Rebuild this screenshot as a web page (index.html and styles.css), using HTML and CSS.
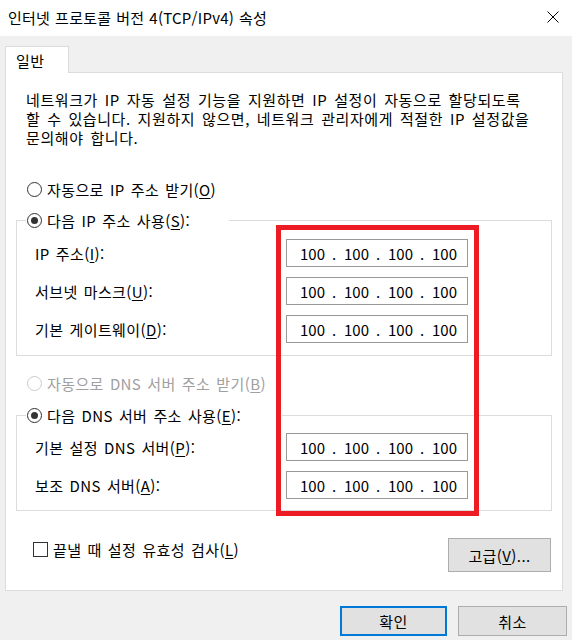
FILE: index.html
```html
<!DOCTYPE html>
<html lang="ko">
<head>
<meta charset="UTF-8">
<title>인터넷 프로토콜 버전 4(TCP/IPv4) 속성</title>
<link rel="stylesheet" href="styles.css">
</head>
<body>
  <div class="titlebar">
    <span class="title">인터넷 프로토콜 버전 4(TCP/IPv4) 속성</span>
    <span class="close">
      <svg width="12" height="12" viewBox="0 0 12 12"><path d="M0.5 0.5 L11.5 11.5 M11.5 0.5 L0.5 11.5" stroke="#000" stroke-width="1"/></svg>
    </span>
  </div>

  <div class="dialog">
    <div class="tabs">
      <div class="tab">일반</div>
    </div>

    <div class="panel">
      <p class="desc">네트워크가 IP 자동 설정 기능을 지원하면 IP 설정이 자동으로 할당되도록<br>할 수 있습니다. 지원하지 않으면, 네트워크 관리자에게 적절한 IP 설정값을<br>문의해야 합니다.</p>

      <div class="radio first"><span class="circle"></span>자동으로 IP 주소 받기(<u>O</u>)</div>

      <fieldset class="group">
        <legend class="legend-ip"><span class="radio"><span class="circle checked"></span>다음 IP 주소 사용(<u>S</u>):</span></legend>
        <div class="row"><span class="label">IP 주소(<u>I</u>):</span><div class="ip"><span class="oct">100</span><span class="sep">.</span><span class="oct">100</span><span class="sep">.</span><span class="oct">100</span><span class="sep">.</span><span class="oct">100</span></div></div>
        <div class="row"><span class="label">서브넷 마스크(<u>U</u>):</span><div class="ip"><span class="oct">100</span><span class="sep">.</span><span class="oct">100</span><span class="sep">.</span><span class="oct">100</span><span class="sep">.</span><span class="oct">100</span></div></div>
        <div class="row"><span class="label">기본 게이트웨이(<u>D</u>):</span><div class="ip"><span class="oct">100</span><span class="sep">.</span><span class="oct">100</span><span class="sep">.</span><span class="oct">100</span><span class="sep">.</span><span class="oct">100</span></div></div>
      </fieldset>

      <div class="radio disabled second"><span class="circle"></span>자동으로 DNS 서버 주소 받기(<u>B</u>)</div>

      <fieldset class="group dns">
        <legend class="legend-dns"><span class="radio"><span class="circle checked"></span>다음 DNS 서버 주소 사용(<u>E</u>):</span></legend>
        <div class="row"><span class="label">기본 설정 DNS 서버(<u>P</u>):</span><div class="ip"><span class="oct">100</span><span class="sep">.</span><span class="oct">100</span><span class="sep">.</span><span class="oct">100</span><span class="sep">.</span><span class="oct">100</span></div></div>
        <div class="row"><span class="label">보조 DNS 서버(<u>A</u>):</span><div class="ip"><span class="oct">100</span><span class="sep">.</span><span class="oct">100</span><span class="sep">.</span><span class="oct">100</span><span class="sep">.</span><span class="oct">100</span></div></div>
      </fieldset>

      <div class="footer">
        <div class="check"><span class="box"></span>끝낼 때 설정 유효성 검사(<u>L</u>)</div>
        <button class="btn advanced">고급(<u>V</u>)...</button>
      </div>
    </div>

    <div class="actions">
      <button class="btn ok">확인</button>
      <button class="btn cancel">취소</button>
    </div>
  </div>

  <!-- 강조 표시 -->
  <div class="highlight"></div>
</body>
</html>
```

FILE: styles.css
```css
body {
  margin: 0;
  width: 572px;
  height: 640px;
  overflow: hidden;
  background: #f0f0f0;
  color: #000;
  font-family: "Noto Sans CJK KR", "Noto Sans", sans-serif;
  font-size: 15px;
  line-height: 19px;
  letter-spacing: 0.4px;
  word-spacing: 1.5px;
}
u {
  text-decoration: underline;
  text-underline-offset: 2px;
}

/* 제목 표시줄 */
.titlebar {
  height: 36px;
  background: #fff;
  display: flex;
  align-items: center;
  justify-content: space-between;
  padding: 0 13px 0 8px;
  box-sizing: border-box;
}
.title {
  margin-top: -2px;
  letter-spacing: 0.25px;
  word-spacing: 0.5px;
}
.close {
  display: flex;
  margin-top: -2px;
}

.dialog {
  padding: 10px 9px 0 5px;
}

/* 탭 */
.tabs {
  display: flex;
}
.tab {
  position: relative;
  z-index: 1;
  width: 64px;
  height: 27px;
  margin-bottom: -1px;
  padding-left: 10px;
  box-sizing: border-box;
  background: #fff;
  border: 1px solid #dcdcdc;
  border-bottom: none;
  line-height: 27px;
}

.panel {
  background: #fff;
  border: 1px solid #dcdcdc;
  padding-bottom: 18px;
}
.desc {
  margin: 0;
  padding: 17px 0 0 20px;
  letter-spacing: 0.6px;
  word-spacing: 2px;
}

/* 라디오 버튼 */
.radio {
  display: flex;
  align-items: center;
  height: 20px;
}
.radio.first {
  margin: 32px 0 0 21px;
}
.radio.second {
  margin: 17px 0 0 21px;
}
.radio.disabled {
  color: #a0a0a0;
}
.circle {
  width: 13px;
  height: 13px;
  border: 1px solid #333;
  border-radius: 50%;
  margin-right: 5px;
  display: flex;
  align-items: center;
  justify-content: center;
  flex-shrink: 0;
}
.disabled .circle {
  border-color: #cccccc;
}
.circle.checked::after {
  content: "";
  width: 7px;
  height: 7px;
  border-radius: 50%;
  background: #333;
}

/* 그룹 상자 */
.group {
  margin: 11px 10px 0 10px;
  padding: 9px 10px 12px 9px;
  border: 1px solid #dcdcdc;
  min-width: 0;
}
.group.dns {
  margin-top: 12px;
  padding-top: 8px;
  padding-bottom: 11px;
}
.group legend {
  padding: 0 0 0 1px;
  background: #fff;
}
.legend-ip {
  width: 202px;
}
.legend-dns {
  width: 255px;
}
.row {
  display: flex;
  align-items: center;
  justify-content: space-between;
  padding: 0 73px 0 9px;
  height: 28px;
}
.row + .row {
  margin-top: 10px;
}
.ip {
  width: 182px;
  height: 28px;
  box-sizing: border-box;
  border: 1px solid #999;
  display: flex;
  align-items: center;
  padding-left: 13px;
  letter-spacing: 0;
}
.oct {
  width: 24px;
  text-align: center;
}
.sep {
  width: 20px;
  text-align: center;
}

/* 아래쪽 */
.footer {
  display: flex;
  justify-content: space-between;
  align-items: flex-start;
  margin: 27px 11px 0 27px;
}
.check {
  display: flex;
  align-items: center;
  height: 20px;
  margin-top: 1px;
}
.box {
  width: 13px;
  height: 13px;
  border: 1px solid #333;
  margin-right: 5px;
}
.btn {
  font-family: inherit;
  font-size: 15px;
  letter-spacing: inherit;
  color: #000;
  background: #e1e1e1;
  border: 1px solid #adadad;
  padding: 0;
  cursor: pointer;
}
.advanced {
  width: 103px;
  height: 34px;
}
.actions {
  display: flex;
  justify-content: flex-end;
  gap: 11px;
  margin-top: 15px;
  margin-right: -4px;
}
.ok {
  width: 107px;
  height: 30px;
  border: 2px solid #0078d7;
}
.cancel {
  width: 109px;
  height: 30px;
}

/* 빨간 테두리 */
.highlight {
  position: absolute;
  left: 276px;
  top: 225px;
  width: 203px;
  height: 291px;
  box-sizing: border-box;
  border: 5px solid #ed1c24;
}
```
